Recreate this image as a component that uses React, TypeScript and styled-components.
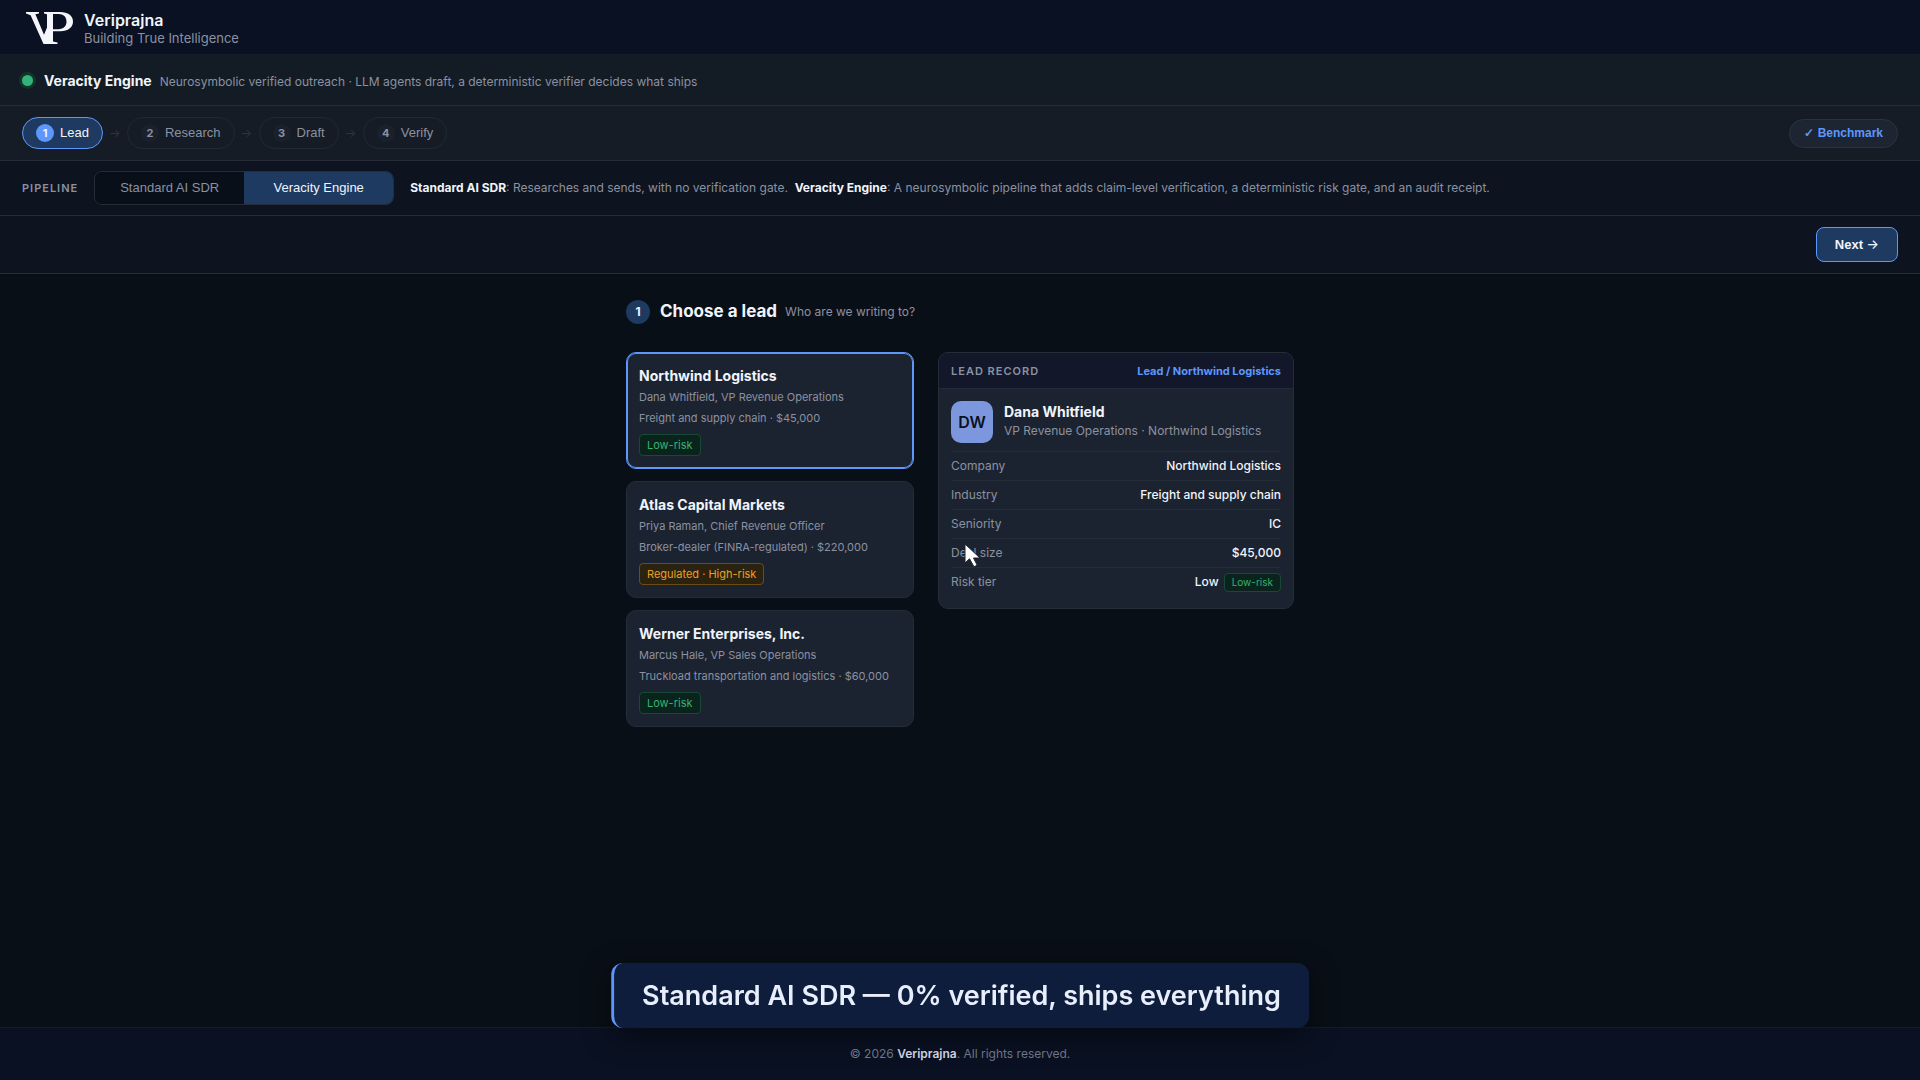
import React from "react";
import styled, { createGlobalStyle, css } from "styled-components";

const inter = `Inter, "Liberation Sans", sans-serif`;
const arial = `"Liberation Sans", Arial, sans-serif`;

const c = {
  text: "#f1f4fb",
  muted: "#8b91a1",
  dim: "#747b8b",
  line: "#262d38",
  blue: "#5e97fb",
  navy: "#1e3a61",
  card: "#1c2330",
  panel: "#151c25",
  band: "#0d141f",
};

const GlobalStyle = createGlobalStyle`
  * { box-sizing: border-box; }
  body { margin: 0; background: #090f17; color: ${c.text}; font-family: ${inter}; }
  h1, h2, h3, p, ol, dl, dd { margin: 0; padding: 0; }
  button { cursor: pointer; }
`;

const Page = styled.div`
  min-height: 100vh;
  display: flex;
  flex-direction: column;
`;

const Header = styled.header`
  display: flex;
  align-items: center;
  gap: 10px;
  height: 55px;
  padding: 2px 26px 0;
  background: #0a1122;
  border-bottom: 1px solid #141b2a;
`;

const Brand = styled.div`
  display: flex;
  flex-direction: column;
`;

const BrandName = styled.span`
  font-size: 16px;
  line-height: 20px;
  font-weight: 600;
`;

const Tagline = styled.span`
  font-size: 13px;
  line-height: 17px;
  color: ${c.muted};
`;

const Band = styled.div<{ $height: number; $bg: string; $gap?: number }>`
  display: flex;
  align-items: center;
  gap: ${(p) => p.$gap ?? 0}px;
  min-height: ${(p) => p.$height}px;
  padding: 0 22px;
  background: ${(p) => p.$bg};
  border-bottom: 1px solid ${c.line};
`;

const StatusDot = styled.span`
  width: 11px;
  height: 11px;
  margin-right: 3px;
  border-radius: 50%;
  background: #34b27b;
  box-shadow: 0 0 0 3px #123527;
`;

const ProductText = styled.div`
  display: flex;
  align-items: baseline;
  gap: 8px;
  padding-top: 2px;
`;

const ProductName = styled.h1`
  font-size: 14px;
  line-height: 20px;
  font-weight: 700;
`;

const ProductNote = styled.p`
  font-size: 12px;
  line-height: 20px;
  color: ${c.muted};
`;

const Steps = styled.ol`
  display: flex;
  align-items: center;
  list-style: none;
`;

const StepItem = styled.li`
  display: flex;
  align-items: center;
`;

const StepArrow = styled.span`
  width: 24px;
  text-align: center;
  font-size: 12px;
  line-height: 16px;
  color: #2c3440;
`;

const StepButton = styled.button<{ $active?: boolean }>`
  display: flex;
  align-items: center;
  gap: 6px;
  height: 32px;
  padding: 0 13px;
  border: 1px solid #212934;
  border-radius: 16px;
  background: transparent;
  font: 400 13px/16px ${arial};
  color: ${c.muted};
  ${(p) =>
    p.$active &&
    css`
      background: ${c.navy};
      border-color: ${c.blue};
      color: ${c.text};
    `}
`;

const StepNumber = styled.span<{ $active?: boolean }>`
  width: 18px;
  height: 18px;
  border-radius: 50%;
  background: ${(p) => (p.$active ? c.blue : "#1a212c")};
  font: 700 11px/18px ${inter};
  text-align: center;
`;

const Benchmark = styled.button`
  height: 29px;
  margin-left: auto;
  padding: 0 14px;
  border: 1px solid #2a3340;
  border-radius: 15px;
  background: #1c2531;
  font: 700 12px/16px ${arial};
  color: ${c.blue};
`;

const BandLabel = styled.span`
  font-size: 11px;
  line-height: 16px;
  font-weight: 600;
  letter-spacing: 1px;
  color: ${c.muted};
`;

const Segments = styled.div`
  display: flex;
  height: 34px;
  border: 1px solid ${c.line};
  border-radius: 8px;
  overflow: hidden;
`;

const Segment = styled.button<{ $active?: boolean }>`
  width: 149px;
  padding: 0;
  border: 0;
  background: ${(p) => (p.$active ? c.navy : "#090f18")};
  font: 400 13px/16px ${arial};
  color: ${(p) => (p.$active ? c.text : c.muted)};
`;

const PipelineNote = styled.p`
  font-size: 12px;
  line-height: 16px;
  color: ${c.muted};
  strong {
    font-weight: 700;
    color: ${c.text};
  }
`;

const NextButton = styled.button`
  height: 35px;
  margin-left: auto;
  padding: 0 18px;
  border: 1px solid ${c.blue};
  border-radius: 8px;
  background: ${c.navy};
  font: 700 13px/16px ${arial};
  color: ${c.text};
`;

const NextArrow = styled.span`
  font: 500 13px/16px ${inter};
`;

const Main = styled.main`
  flex: 1;
  width: 100%;
  max-width: 668px;
  margin: 0 auto;
  padding: 26px 0;
`;

const SectionHead = styled.div`
  display: flex;
  align-items: center;
  margin-bottom: 28px;
`;

const SectionNumber = styled.span`
  width: 24px;
  margin-right: 10px;
  border-radius: 50%;
  background: ${c.navy};
  font-size: 12px;
  line-height: 24px;
  font-weight: 700;
  text-align: center;
`;

const SectionTitle = styled.h2`
  margin-right: 8px;
  padding-bottom: 2px;
  font-size: 17px;
  line-height: 22px;
  font-weight: 700;
`;

const SectionNote = styled.p`
  font-size: 12px;
  line-height: 24px;
  color: ${c.muted};
`;

const Columns = styled.div`
  display: grid;
  grid-template-columns: 288px 1fr;
  align-items: start;
  gap: 24px;
`;

const LeadList = styled.div`
  display: grid;
  gap: 12px;
`;

const LeadCard = styled.button<{ $selected?: boolean }>`
  display: flex;
  flex-direction: column;
  align-items: flex-start;
  padding: 12px;
  border: 1px solid ${(p) => (p.$selected ? c.blue : "#252d39")};
  border-radius: 10px;
  box-shadow: ${(p) => (p.$selected ? `inset 0 0 0 1px ${c.blue}` : "none")};
  background: ${c.card};
  font-family: ${inter};
  color: ${c.muted};
  text-align: left;
`;

const LeadName = styled.span`
  font-size: 14px;
  line-height: 22px;
  font-weight: 700;
  color: ${c.text};
`;

const LeadLine = styled.span`
  font-size: 11px;
  line-height: 21px;
  white-space: nowrap;
`;

const Tag = styled.span<{ $warn?: boolean; $spaced?: boolean }>`
  display: inline-block;
  margin-top: ${(p) => (p.$spaced ? 5 : 0)}px;
  padding: 0 7px;
  border: 1px solid ${(p) => (p.$warn ? "#6b4c12" : "#174a34")};
  border-radius: 4px;
  background: ${(p) => (p.$warn ? "#2c2210" : "#0a241d")};
  font-size: ${(p) => (p.$spaced ? 11 : 10)}px;
  line-height: ${(p) => (p.$spaced ? 20 : 17)}px;
  font-weight: 400;
  color: ${(p) => (p.$warn ? "#e9a020" : "#34b36f")};
`;

const Record = styled.section`
  border: 1px solid #252d39;
  border-radius: 10px;
  background: ${c.card};
  overflow: hidden;
`;

const RecordHead = styled.div`
  display: flex;
  align-items: center;
  justify-content: space-between;
  height: 36px;
  padding: 0 12px;
  background: #12182a;
  border-bottom: 1px solid ${c.line};
`;

const Crumb = styled.a`
  font-size: 11px;
  line-height: 16px;
  font-weight: 700;
  color: ${c.blue};
  text-decoration: none;
`;

const RecordBody = styled.div`
  padding: 12px;
`;

const Person = styled.div`
  display: flex;
  align-items: center;
  gap: 11px;
  padding-bottom: 8px;
`;

const PersonText = styled.div`
  padding-bottom: 2px;
`;

const Avatar = styled.span`
  width: 42px;
  border-radius: 10px;
  background: #7c97dd;
  font-size: 16px;
  line-height: 42px;
  font-weight: 600;
  text-align: center;
  color: #0a1120;
`;

const PersonName = styled.h3`
  font-size: 14px;
  line-height: 19px;
  font-weight: 700;
`;

const PersonRole = styled.p`
  font-size: 12px;
  line-height: 20px;
  color: ${c.muted};
`;

const Field = styled.div`
  display: flex;
  align-items: center;
  justify-content: space-between;
  height: 29px;
  border-top: 1px solid #252d39;
  font-size: 12px;
  line-height: 18px;
  dt {
    color: ${c.muted};
  }
  dd {
    display: flex;
    align-items: center;
    gap: 5px;
    font-weight: 500;
  }
`;

const Pointer = styled.svg`
  position: absolute;
  left: 964px;
  top: 543px;
  pointer-events: none;
`;

const Caption = styled.div`
  position: fixed;
  left: 50%;
  bottom: 52px;
  transform: translateX(-50%);
  padding: 0 28px;
  border-left: 3px solid ${c.blue};
  border-radius: 12px;
  background: #0f1d3d;
  box-shadow: 0 8px 30px rgba(0, 0, 0, 0.45);
  font-size: 27px;
  line-height: 65px;
  font-weight: 600;
  white-space: nowrap;
  color: #e8eefc;
`;

const Footer = styled.footer`
  height: 53px;
  border-top: 1px solid #141b2a;
  background: #0a1122;
  font-size: 12px;
  line-height: 52px;
  text-align: center;
  color: ${c.dim};
  strong {
    font-weight: 600;
    color: #d5daea;
  }
`;

const steps = ["Lead", "Research", "Draft", "Verify"];

const leads = [
  { name: "Northwind Logistics", who: "Dana Whitfield, VP Revenue Operations", deal: "Freight and supply chain · $45,000", risk: "Low-risk" },
  { name: "Atlas Capital Markets", who: "Priya Raman, Chief Revenue Officer", deal: "Broker-dealer (FINRA-regulated) · $220,000", risk: "Regulated · High-risk" },
  { name: "Werner Enterprises, Inc.", who: "Marcus Hale, VP Sales Operations", deal: "Truckload transportation and logistics · $60,000", risk: "Low-risk" },
];

const fields = [
  ["Company", "Northwind Logistics"],
  ["Industry", "Freight and supply chain"],
  ["Seniority", "IC"],
  ["Deal size", "$45,000"],
];

function Logo() {
  return (
    <svg width="48" height="34" viewBox="0 0 48 34" fill="#f4f6fc" aria-label="Veriprajna logo">
      <path d="M0 1h13v1.400l-3.600.8 8.600 20.600 3-7.200V3.200l-3-.8V1h16c8 0 13 3.600 13 9.600s-5 9.600-12.500 9.600H27v10.400l4.500.9V33H17.500L4.600 4.200 0 2.400zM27 3v15.200h5.500c5 0 8-2.800 8-7.600S37.500 3 32.500 3z" />
    </svg>
  );
}

export default function App() {
  return (
    <Page>
      <GlobalStyle />
      <Header>
        <Logo />
        <Brand>
          <BrandName>Veriprajna</BrandName>
          <Tagline>Building True Intelligence</Tagline>
        </Brand>
      </Header>
      <Band $height={51} $bg="#131c24" $gap={8}>
        <StatusDot />
        <ProductText>
          <ProductName>Veracity Engine</ProductName>
          <ProductNote>Neurosymbolic verified outreach · LLM agents draft, a deterministic verifier decides what ships</ProductNote>
        </ProductText>
      </Band>
      <Band $height={55} $bg={c.panel}>
        <Steps>
          {steps.map((name, i) => (
            <StepItem key={name}>
              {i > 0 && <StepArrow>→</StepArrow>}
              <StepButton $active={i === 0}>
                <StepNumber $active={i === 0}>{i + 1}</StepNumber>
                {name}
              </StepButton>
            </StepItem>
          ))}
        </Steps>
        <Benchmark>✓ Benchmark</Benchmark>
      </Band>
      <Band $height={55} $bg={c.band} $gap={16}>
        <BandLabel>PIPELINE</BandLabel>
        <Segments>
          <Segment>Standard AI SDR</Segment>
          <Segment $active>Veracity Engine</Segment>
        </Segments>
        <PipelineNote>
          <strong>Standard AI SDR</strong>: Researches and sends, with no verification gate. &nbsp;<strong>Veracity Engine</strong>: A
          neurosymbolic pipeline that adds claim-level verification, a deterministic risk gate, and an audit receipt.
        </PipelineNote>
      </Band>
      <Band $height={58} $bg={c.band}>
        <NextButton>
          Next <NextArrow>→</NextArrow>
        </NextButton>
      </Band>
      <Main>
        <SectionHead>
          <SectionNumber>1</SectionNumber>
          <SectionTitle>Choose a lead</SectionTitle>
          <SectionNote>Who are we writing to?</SectionNote>
        </SectionHead>
        <Columns>
          <LeadList>
            {leads.map((lead, i) => (
              <LeadCard key={lead.name} $selected={i === 0}>
                <LeadName>{lead.name}</LeadName>
                <LeadLine>{lead.who}</LeadLine>
                <LeadLine>{lead.deal}</LeadLine>
                <Tag $spaced $warn={lead.risk !== "Low-risk"}>{lead.risk}</Tag>
              </LeadCard>
            ))}
          </LeadList>
          <Record>
            <RecordHead>
              <BandLabel>LEAD RECORD</BandLabel>
              <Crumb href="#lead">Lead / Northwind Logistics</Crumb>
            </RecordHead>
            <RecordBody>
              <Person>
                <Avatar>DW</Avatar>
                <PersonText>
                  <PersonName>Dana Whitfield</PersonName>
                  <PersonRole>VP Revenue Operations · Northwind Logistics</PersonRole>
                </PersonText>
              </Person>
              <dl>
                {fields.map(([label, value]) => (
                  <Field key={label}>
                    <dt>{label}</dt>
                    <dd>{value}</dd>
                  </Field>
                ))}
                <Field>
                  <dt>Risk tier</dt>
                  <dd>
                    Low <Tag>Low-risk</Tag>
                  </dd>
                </Field>
              </dl>
            </RecordBody>
          </Record>
        </Columns>
      </Main>
      <Footer>
        © 2026 <strong>Veriprajna</strong>. All rights reserved.
      </Footer>
      <Caption>Standard AI SDR — 0% verified, ships everything</Caption>
      <Pointer width="18" height="26" viewBox="0 0 18 26" aria-hidden="true">
        <path d="M1 1v19l4.500-4.200 4.500 8 3.200-1.600L9.500 15H16z" fill="#fff" stroke="#1c2330" strokeWidth="1" />
      </Pointer>
    </Page>
  );
}
